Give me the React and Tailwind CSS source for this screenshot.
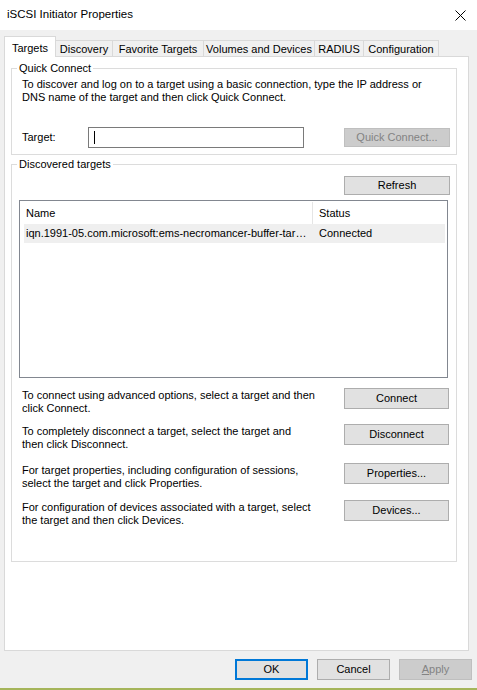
import React from "react";

const Btn = ({ children, disabled, primary, className = "" }) => (
  <div
    className={`flex items-center justify-center text-[11px] whitespace-nowrap ${
      disabled
        ? "bg-[#cccccc] border border-[#bfbfbf] text-[#838383]"
        : primary
        ? "bg-[#e1e1e1] border-2 border-[#0078d7] text-black"
        : "bg-[#e1e1e1] border border-[#adadad] text-black"
    } ${className}`}
  >
    {children}
  </div>
);

const tabs = [
  { label: "Targets", w: "w-[52px]", active: true },
  { label: "Discovery", w: "w-[58px]" },
  { label: "Favorite Targets", w: "w-[92px]" },
  { label: "Volumes and Devices", w: "w-[112px]" },
  { label: "RADIUS", w: "w-[50px]" },
  { label: "Configuration", w: "w-[76px]" },
];

const Tab = ({ label, active, w }) =>
  active ? (
    <div className={`${w} h-[21px] bg-white border border-b-0 border-[#d9d9d9] flex justify-center pt-[3px] text-[11px] -mr-px relative z-10 whitespace-nowrap`}>
      {label}
    </div>
  ) : (
    <div className={`${w} h-[17px] mt-[4px] bg-[#f0f0f0] border border-b-0 border-[#d9d9d9] flex items-center justify-center text-[11px] -mr-px whitespace-nowrap`}>
      {label}
    </div>
  );

const ActionRow = ({ lines, button, className = "" }) => (
  <div className={`flex items-start ${className}`}>
    <div className="w-[332px] pl-[10px] text-[11px] leading-[13px] whitespace-nowrap pt-[1px]">
      {lines.map((l) => (
        <div key={l}>{l}</div>
      ))}
    </div>
    <Btn className="w-[105px] h-[21px]">{button}</Btn>
  </div>
);

export default function App() {
  return (
    <div className="w-[477px] h-[690px] bg-[#f0f0f0] flex flex-col font-['Liberation_Sans',Arial,sans-serif] text-black overflow-hidden">
      {/* Title bar */}
      <div className="h-[30px] bg-white flex items-center justify-between pl-[7px] pr-[11px] shrink-0">
        <span className="text-[11.5px]">iSCSI Initiator Properties</span>
        <svg width="11" height="11" viewBox="0 0 11 11">
          <path d="M0.5 0.5 L10.5 10.5 M10.5 0.5 L0.5 10.5" stroke="#000" strokeWidth="1" />
        </svg>
      </div>

      {/* Tabs */}
      <div className="flex pl-[4px] pt-[6px]">
        {tabs.map((t) => (
          <Tab key={t.label} {...t} />
        ))}
      </div>

      {/* Panel */}
      <div className="ml-[4px] w-[465px] h-[595px] bg-white border border-[#d9d9d9] -mt-px px-[6px] pt-[3px]">
        <fieldset className="border border-[#dcdcdc] w-[446px] h-[95px]">
          <legend className="ml-[5px] px-[2px] text-[11px] leading-[16px]">Quick Connect</legend>
          <div className="text-[11px] leading-[13px] mt-[2px] pl-[10px] whitespace-nowrap">
            <div>To discover and log on to a target using a basic connection, type the IP address or</div>
            <div>DNS name of the target and then click Quick Connect.</div>
          </div>
          <div className="flex items-center mt-[23px] pl-[10px]">
            <span className="w-[66px] text-[11px]">Target:</span>
            <div className="w-[216px] h-[21px] border border-[#7a7a7a] flex items-center pl-[5px]">
              <div className="w-px h-[13px] bg-black" />
            </div>
            <Btn disabled className="ml-[40px] w-[106px] h-[19px]">Quick Connect...</Btn>
          </div>
        </fieldset>

        <fieldset className="border border-[#dcdcdc] w-[446px] h-[406px] mt-[1px]">
          <legend className="ml-[5px] px-[2px] text-[11px] leading-[16px]">Discovered targets</legend>
          <div className="flex pl-[332px] mt-[4px]">
            <Btn className="w-[106px] h-[19px]">Refresh</Btn>
          </div>
          <div className="ml-[7px] w-[429px] h-[178px] border border-[#828790] mt-[5px] p-[1px] pl-[4px]">
            <div className="flex h-[22px] text-[11px]">
              <div className="w-[289px] pl-[2px] flex items-center border-r border-[#e5e5e5]">Name</div>
              <div className="pl-[6px] flex items-center">Status</div>
            </div>
            <div className="flex h-[19px] bg-[#efefef] text-[11px] items-center w-[421px]">
              <div className="w-[289px] pl-[2px] whitespace-nowrap">
                iqn.1991-05.com.microsoft:ems-necromancer-buffer-tar…
              </div>
              <div className="pl-[6px]">Connected</div>
            </div>
          </div>

          <ActionRow
            className="mt-[10px]"
            lines={["To connect using advanced options, select a target and then", "click Connect."]}
            button="Connect"
          />
          <ActionRow
            className="mt-[9px]"
            lines={["To completely disconnect a target, select the target and", "then click Disconnect."]}
            button="Disconnect"
          />
          <ActionRow
            className="mt-[12px]"
            lines={["For target properties, including configuration of sessions,", "select the target and click Properties."]}
            button="Properties..."
          />
          <ActionRow
            className="mt-[10px]"
            lines={["For configuration of devices associated with a target, select", "the target and then click Devices."]}
            button="Devices..."
          />
        </fieldset>
      </div>

      {/* Bottom buttons */}
      <div className="flex gap-[9px] pl-[235px] mt-[8px]">
        <Btn primary className="w-[73px] h-[21px]">OK</Btn>
        <Btn className="w-[73px] h-[21px]">Cancel</Btn>
        <Btn disabled className="w-[73px] h-[21px]">
          <span className="underline">A</span>pply
        </Btn>
      </div>
      <div className="mt-auto h-[2px] bg-[#a5b55a]" />
    </div>
  );
}
